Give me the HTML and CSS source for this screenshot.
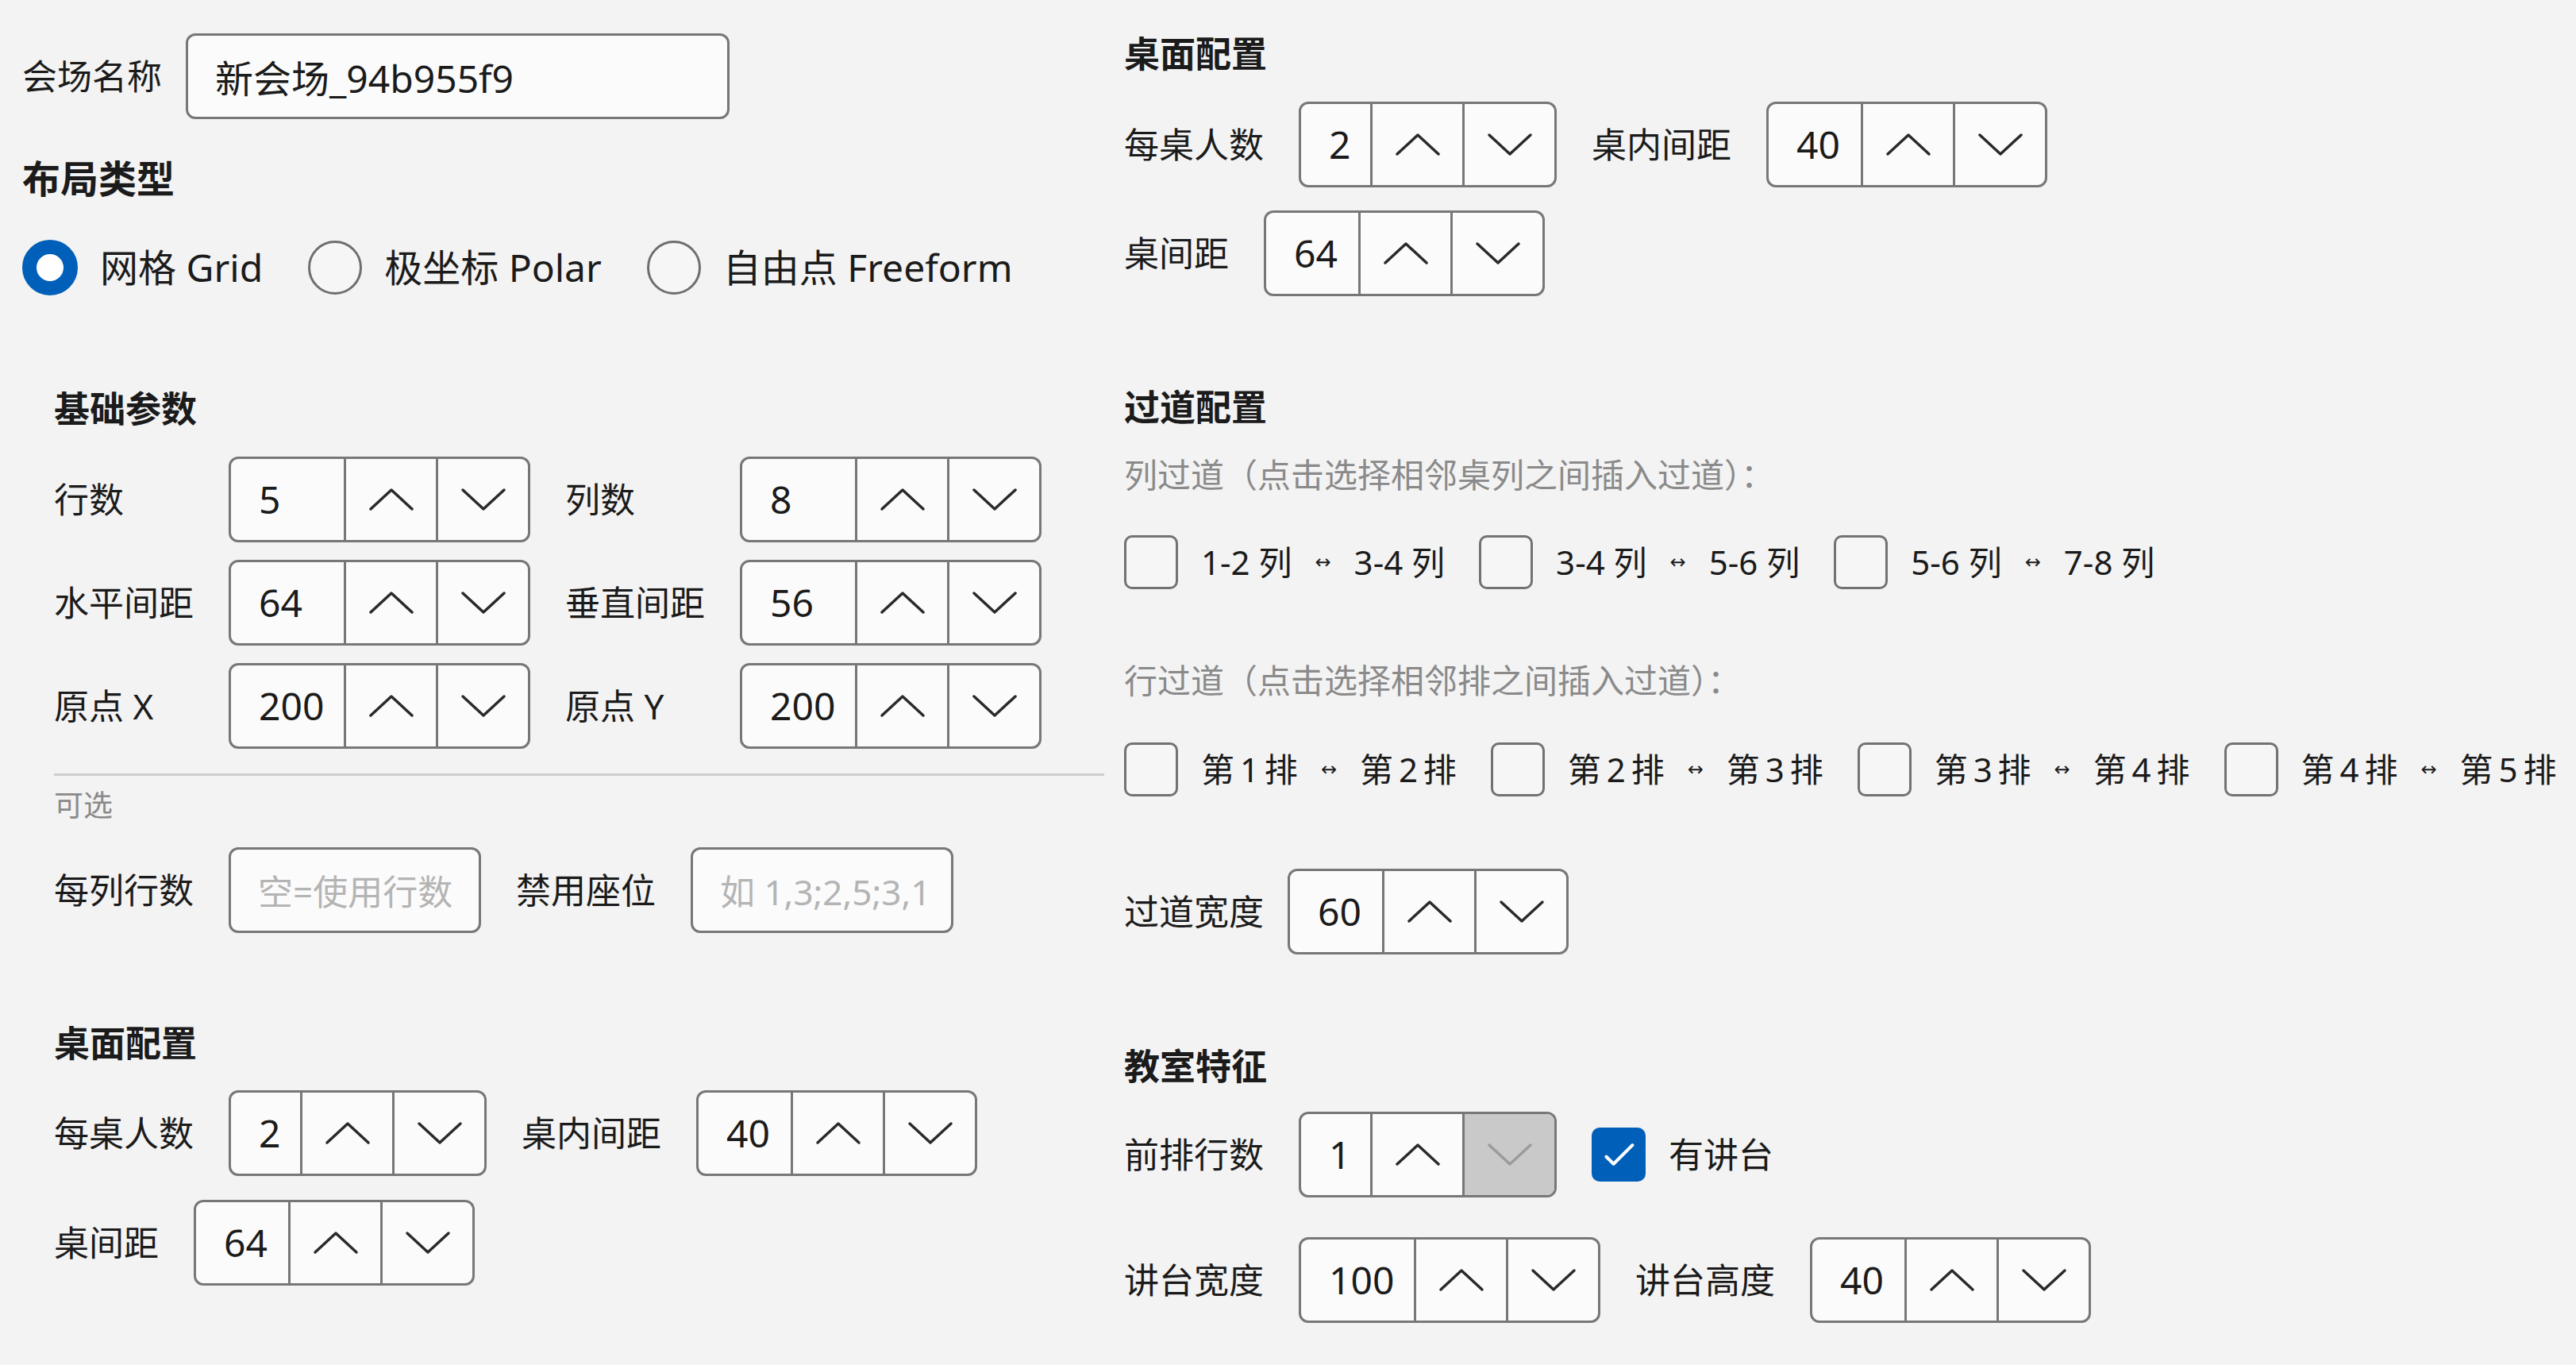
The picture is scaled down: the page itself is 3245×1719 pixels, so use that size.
FILE: index.html
```html
<!DOCTYPE html>
<html lang="zh-CN">
<head>
  <meta charset="UTF-8" />
  <title>会场配置</title>
  <link rel="stylesheet" href="styles.css">
</head>
<body>
<div class="page">

  <div class="left">
    <div class="row name-row">
      <label>会场名称</label>
      <input class="text name" value="新会场_94b955f9" />
    </div>

    <h2>布局类型</h2>
    <div class="radios">
      <label class="radio"><span class="dot on"></span>网格 Grid</label>
      <label class="radio"><span class="dot"></span>极坐标 Polar</label>
      <label class="radio"><span class="dot"></span>自由点 Freeform</label>
    </div>

    <div class="sub">
      <h3 class="basic-title">基础参数</h3>
      <div class="grid">
        <label>行数</label>
        <div class="spin"><input class="num w3" value="5" /><button class="up"><svg viewBox="0 0 58 30"><polyline points="3,27 29,3 55,27"/></svg></button><button class="dn"><svg viewBox="0 0 58 30"><polyline points="3,3 29,27 55,3"/></svg></button></div>
        <label>列数</label>
        <div class="spin"><input class="num w3" value="8" /><button class="up"><svg viewBox="0 0 58 30"><polyline points="3,27 29,3 55,27"/></svg></button><button class="dn"><svg viewBox="0 0 58 30"><polyline points="3,3 29,27 55,3"/></svg></button></div>

        <label>水平间距</label>
        <div class="spin"><input class="num w3" value="64" /><button class="up"><svg viewBox="0 0 58 30"><polyline points="3,27 29,3 55,27"/></svg></button><button class="dn"><svg viewBox="0 0 58 30"><polyline points="3,3 29,27 55,3"/></svg></button></div>
        <label>垂直间距</label>
        <div class="spin"><input class="num w3" value="56" /><button class="up"><svg viewBox="0 0 58 30"><polyline points="3,27 29,3 55,27"/></svg></button><button class="dn"><svg viewBox="0 0 58 30"><polyline points="3,3 29,27 55,3"/></svg></button></div>

        <label>原点 X</label>
        <div class="spin"><input class="num w3" value="200" /><button class="up"><svg viewBox="0 0 58 30"><polyline points="3,27 29,3 55,27"/></svg></button><button class="dn"><svg viewBox="0 0 58 30"><polyline points="3,3 29,27 55,3"/></svg></button></div>
        <label>原点 Y</label>
        <div class="spin"><input class="num w3" value="200" /><button class="up"><svg viewBox="0 0 58 30"><polyline points="3,27 29,3 55,27"/></svg></button><button class="dn"><svg viewBox="0 0 58 30"><polyline points="3,3 29,27 55,3"/></svg></button></div>
      </div>

      <hr class="sep" />
      <div class="hint">可选</div>

      <div class="row opt-row">
        <label>每列行数</label>
        <input class="text opt1" placeholder="空=使用行数" />
        <label>禁用座位</label>
        <input class="text opt2" placeholder="如 1,3;2,5;3,1" />
      </div>

      <h3 class="desk-title">桌面配置</h3>
      <div class="row desk-row1">
        <label>每桌人数</label>
        <div class="spin"><input class="num w1" value="2" /><button class="up"><svg viewBox="0 0 58 30"><polyline points="3,27 29,3 55,27"/></svg></button><button class="dn"><svg viewBox="0 0 58 30"><polyline points="3,3 29,27 55,3"/></svg></button></div>
        <label>桌内间距</label>
        <div class="spin"><input class="num w2" value="40" /><button class="up"><svg viewBox="0 0 58 30"><polyline points="3,27 29,3 55,27"/></svg></button><button class="dn"><svg viewBox="0 0 58 30"><polyline points="3,3 29,27 55,3"/></svg></button></div>
      </div>
      <div class="row desk-row2">
        <label>桌间距</label>
        <div class="spin"><input class="num w2" value="64" /><button class="up"><svg viewBox="0 0 58 30"><polyline points="3,27 29,3 55,27"/></svg></button><button class="dn"><svg viewBox="0 0 58 30"><polyline points="3,3 29,27 55,3"/></svg></button></div>
      </div>
    </div>
  </div>

  <div class="right">
    <h3>桌面配置</h3>
    <div class="row desk-row1 top-row1">
      <label>每桌人数</label>
      <div class="spin"><input class="num w1" value="2" /><button class="up"><svg viewBox="0 0 58 30"><polyline points="3,27 29,3 55,27"/></svg></button><button class="dn"><svg viewBox="0 0 58 30"><polyline points="3,3 29,27 55,3"/></svg></button></div>
      <label>桌内间距</label>
      <div class="spin"><input class="num w2" value="40" /><button class="up"><svg viewBox="0 0 58 30"><polyline points="3,27 29,3 55,27"/></svg></button><button class="dn"><svg viewBox="0 0 58 30"><polyline points="3,3 29,27 55,3"/></svg></button></div>
    </div>
    <div class="row desk-row2 top-row2">
      <label>桌间距</label>
      <div class="spin"><input class="num w2" value="64" /><button class="up"><svg viewBox="0 0 58 30"><polyline points="3,27 29,3 55,27"/></svg></button><button class="dn"><svg viewBox="0 0 58 30"><polyline points="3,3 29,27 55,3"/></svg></button></div>
    </div>

    <h3 class="aisle-title">过道配置</h3>
    <div class="caption cap1">列过道（点击选择相邻桌列之间插入过道）：</div>
    <div class="chks chks1">
      <label class="chk"><span class="box"></span>1-2 列 <span class="arr">↔</span> 3-4 列</label>
      <label class="chk"><span class="box"></span>3-4 列 <span class="arr">↔</span> 5-6 列</label>
      <label class="chk"><span class="box"></span>5-6 列 <span class="arr">↔</span> 7-8 列</label>
    </div>
    <div class="caption cap2">行过道（点击选择相邻排之间插入过道）：</div>
    <div class="chks chks2">
      <label class="chk"><span class="box"></span>第 1 排 <span class="arr">↔</span> 第 2 排</label>
      <label class="chk"><span class="box"></span>第 2 排 <span class="arr">↔</span> 第 3 排</label>
      <label class="chk"><span class="box"></span>第 3 排 <span class="arr">↔</span> 第 4 排</label>
      <label class="chk"><span class="box"></span>第 4 排 <span class="arr">↔</span> 第 5 排</label>
    </div>
    <div class="row aisle-row">
      <label>过道宽度</label>
      <div class="spin"><input class="num w2" value="60" /><button class="up"><svg viewBox="0 0 58 30"><polyline points="3,27 29,3 55,27"/></svg></button><button class="dn"><svg viewBox="0 0 58 30"><polyline points="3,3 29,27 55,3"/></svg></button></div>
    </div>

    <h3 class="room-title">教室特征</h3>
    <div class="row front-row">
      <label>前排行数</label>
      <div class="spin"><input class="num w1" value="1" /><button class="up"><svg viewBox="0 0 58 30"><polyline points="3,27 29,3 55,27"/></svg></button><button class="dn off"><svg viewBox="0 0 58 30"><polyline points="3,3 29,27 55,3"/></svg></button></div>
      <label class="chk"><span class="box on"><svg viewBox="0 0 68 68"><polyline points="17,37 27,47 53,21"/></svg></span>有讲台</label>
    </div>
    <div class="row podium-row">
      <label>讲台宽度</label>
      <div class="spin"><input class="num w3" value="100" /><button class="up"><svg viewBox="0 0 58 30"><polyline points="3,27 29,3 55,27"/></svg></button><button class="dn"><svg viewBox="0 0 58 30"><polyline points="3,3 29,27 55,3"/></svg></button></div>
      <label>讲台高度</label>
      <div class="spin"><input class="num w2" value="40" /><button class="up"><svg viewBox="0 0 58 30"><polyline points="3,27 29,3 55,27"/></svg></button><button class="dn"><svg viewBox="0 0 58 30"><polyline points="3,3 29,27 55,3"/></svg></button></div>
    </div>
  </div>

</div>
</body>
</html>
```

FILE: styles.css
```css
body {
  margin: 0;
  background: #f3f3f3;
  color: #1b1b1b;
  font-family: "Noto Sans", "Noto Sans CJK SC", sans-serif;
  font-size: 44px;
  line-height: 60px;
}
.page {
  display: flex;
  gap: 25px;
}
.left {
  width: 1391px;
  flex: none;
  padding: 42px 0 0 28px;
  box-sizing: border-box;
}
.right {
  padding-top: 38px;
}
h2 {
  font-size: 48px;
  font-weight: 700;
  line-height: 60px;
  margin: 45px 0 0;
}
h3 {
  font-size: 45px;
  font-weight: 700;
  line-height: 60px;
  margin: 0;
}
label {
  white-space: nowrap;
}
.row {
  display: flex;
  align-items: center;
  gap: 44px;
}
.name-row {
  gap: 30px;
}

/* text boxes */
.text {
  height: 108px;
  border: 3px solid #777;
  border-radius: 12px;
  background: #fbfbfb;
  font: inherit;
  font-size: 48px;
  color: #1b1b1b;
  padding: 0 0 0 34px;
  box-sizing: border-box;
  outline: none;
}
.text::placeholder {
  color: #b4b4b4;
  font-size: 44px;
}
.name { width: 685px; }
.opt1 { width: 318px; }
.opt2 { width: 331px; }

/* radios */
.radios {
  display: flex;
  align-items: center;
  gap: 57px;
  margin-top: 47px;
  height: 70px;
}
.radio {
  display: flex;
  align-items: center;
  gap: 28px;
  font-size: 48px;
}
.dot {
  width: 68px;
  height: 68px;
  border-radius: 50%;
  border: 3px solid #6e6e6e;
  background: #f6f6f6;
  box-sizing: border-box;
}
.dot.on {
  width: 70px;
  height: 70px;
  border: 18px solid #005fb8;
  background: #fff;
}

/* basic params */
.sub {
  padding-left: 40px;
}
.basic-title {
  margin-top: 113px;
}
.grid {
  display: grid;
  grid-template-columns: auto auto auto auto;
  justify-content: start;
  align-items: center;
  column-gap: 44px;
  row-gap: 22px;
  margin-top: 30px;
}
.sep {
  border: 0;
  border-top: 3px solid #cdcdcd;
  margin: 31px 0 0;
}
.hint {
  color: #8a8a8a;
  font-size: 37px;
  line-height: 50px;
  margin-top: 12px;
}
.opt-row {
  margin-top: 28px;
}
.desk-title {
  margin-top: 109px;
}
.desk-row1 {
  margin-top: 29px;
}
.desk-row2 {
  margin-top: 30px;
}
.top-row1 { margin-top: 30px; }
.top-row2 { margin-top: 29px; }

/* number spinner */
.spin {
  display: flex;
  height: 108px;
  border: 3px solid #777;
  border-radius: 12px;
  background: #fbfbfb;
  box-sizing: border-box;
  overflow: hidden;
  flex: none;
}
.num {
  border: 0;
  background: transparent;
  font: inherit;
  font-size: 48px;
  color: #1b1b1b;
  padding: 0 0 0 35px;
  box-sizing: border-box;
  outline: none;
}
.num.w1 { width: 87px; }
.num.w2 { width: 116px; }
.num.w3 { width: 142px; }
.spin button {
  width: 116px;
  border: 0;
  border-left: 3px solid #777;
  background: transparent;
  padding: 0;
  display: flex;
  align-items: center;
  justify-content: center;
  box-sizing: border-box;
}
.spin svg {
  width: 58px;
  height: 30px;
  fill: none;
  stroke: #2a2a2a;
  stroke-width: 3.5;
  stroke-linecap: round;
  stroke-linejoin: round;
}
.spin button.off {
  background: #c9c9c9;
}
.spin button.off svg {
  stroke: #9b9b9b;
}

/* aisle */
.aisle-title {
  margin-top: 110px;
}
.caption {
  color: #8a8a8a;
  font-size: 42px;
  line-height: 54px;
}
.cap1 { margin-top: 28px; }
.cap2 { margin-top: 88px; }
.chks {
  display: flex;
  gap: 43px;
}
.chks1 { margin-top: 49px; }
.chks2 { margin-top: 51px; }
.chks2 .chk {
  word-spacing: -4px;
}
.chk {
  display: flex;
  align-items: center;
  gap: 29px;
  font-size: 42px;
  height: 68px;
}
.arr {
  font-family: "DejaVu Sans", sans-serif;
  font-size: 24px;
}
.box {
  width: 68px;
  height: 68px;
  border: 3px solid #727272;
  border-radius: 10px;
  background: #f6f6f6;
  box-sizing: border-box;
  flex: none;
}
.box.on {
  background: #005fb8;
  border-color: #005fb8;
  display: flex;
}
.box.on svg {
  width: 62px;
  height: 62px;
  fill: none;
  stroke: #fff;
  stroke-width: 4.5;
  stroke-linecap: round;
  stroke-linejoin: round;
}
.front-row .chk {
  font-size: 44px;
}
.aisle-row {
  gap: 30px;
  margin-top: 91px;
}
.room-title {
  margin-top: 111px;
}
.front-row {
  margin-top: 27px;
}
.podium-row {
  margin-top: 50px;
}
```
